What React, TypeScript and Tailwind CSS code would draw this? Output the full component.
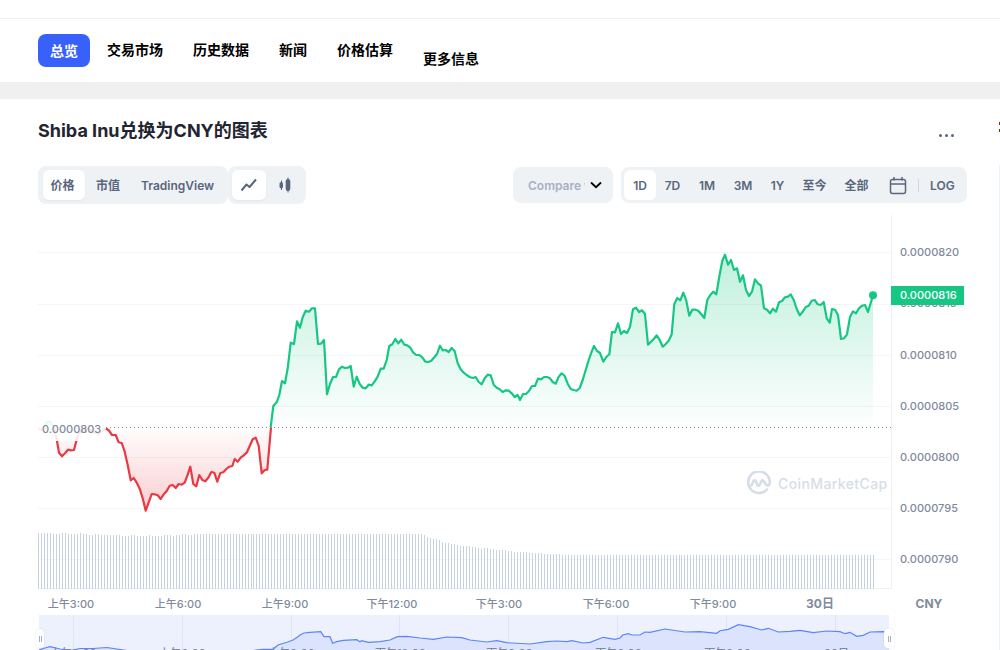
import React from "react";

const FONT = { fontFamily: "Inter, 'Noto Sans CJK SC', sans-serif" };

type P = [number, number];
const map = (pts: number[][], ox: number, oy: number): P[] =>
  pts.map(([x, y]) => [ox + x / 3, oy + y / 3] as P);
const str = (pts: P[]) => pts.map(([x, y]) => `${x.toFixed(1)},${y.toFixed(1)}`).join(" ");

const green: P[] = [
  ...map(
    [[62,442],[70,378],[80,367],[88,345],[96,303],[105,310],[113,265],[122,188],[132,192],[141,124],[150,143],[158,112],[167,92],[177,95],[186,85],[195,85],[204,192],[213,191],[222,180],[231,343],[240,312],[249,291],[258,291],[267,268],[276,260],[285,264],[294,263],[302,258],[311,320],[320,290],[329,312],[338,323],[347,325],[356,314],[365,316],[374,304],[383,290],[392,266],[401,266],[410,240],[418,198],[427,193],[436,177],[445,190],[454,179],[463,194],[472,196],[481,203],[490,218],[499,225],[508,225],[517,232],[526,245],[535,246],[544,242],[553,232],[561,222],[570,197],[578,211],[587,210],[596,216],[605,204],[614,214],[623,250],[632,268],[641,278],[650,285],[659,291],[668,294],[677,291],[686,306],[695,313],[704,295],[713,284],[722,286],[731,314],[740,323],[749,328],[758,336],[767,331],[776,332],[785,340],[794,351],[803,345],[810,360],[819,342],[828,342],[837,333],[846,318],[855,318],[864,296],[873,298],[882,291],[891,291],[900,295]],
    250, 280),
  ...map(
    [[8,426],[17,431],[26,410],[35,400],[44,408],[53,431],[62,447],[71,450],[80,452],[89,444],[98,420],[107,390],[116,360],[125,335],[132,318],[141,333],[150,339],[160,365],[169,351],[178,343],[186,276],[195,277],[204,250],[213,282],[222,273],[231,279],[240,260],[249,208],[258,203],[267,216],[276,211],[285,222],[294,314],[303,305],[312,296],[320,286],[329,300],[338,320],[347,312],[356,302],[365,283],[373,192],[382,174],[391,181],[400,158],[409,182],[418,227],[427,209],[436,209],[445,212],[454,223],[463,234],[472,180],[481,165],[490,155],[499,163],[508,110],[517,62],[525,44],[534,74],[543,60],[552,90],[561,85],[570,125],[579,106],[588,150],[597,168],[606,155],[615,118],[624,130],[633,137],[642,205],[651,209],[660,220],[669,206],[678,215],[687,187],[696,183],[705,172],[714,170],[722,163],[731,180],[740,207],[749,226],[758,215],[767,201],[776,197],[785,182],[794,180],[803,193],[812,195],[821,186],[830,235],[839,248],[846,207],[855,209],[864,225],[873,297],[882,295],[891,283],[900,231],[909,214],[918,220],[927,205],[936,197],[945,195],[954,216],[969,166]],
    550, 240),
];

const red2 = map(
  [[228,55],[237,62],[246,75],[257,75],[266,97],[275,99],[284,125],[293,165],[302,211],[311,204],[320,218],[329,236],[338,265],[347,302],[356,277],[365,252],[374,253],[383,256],[392,267],[401,253],[410,243],[419,227],[428,225],[437,234],[446,222],[455,224],[464,218],[473,194],[481,170],[490,222],[499,229],[508,195],[517,210],[526,214],[535,203],[544,186],[553,188],[562,215],[571,189],[580,187],[589,177],[598,170],[607,168],[614,147],[623,155],[632,143],[641,136],[650,128],[659,108],[668,88],[677,83],[686,108],[695,190],[704,180],[712,179],[723,52]],
  30, 410);

const red1 = map(
  [[72,52],[76,70],[81,93],[87,128],[96,139],[105,130],[114,119],[123,121],[132,120],[139,93],[145,72],[155,62],[170,55],[195,68],[207,72],[220,60],[228,55]],
  30, 410);
const redGhost = map([[25,54],[35,60],[42,54]], 30, 410);
const greenGhost = map([[42,52],[50,37],[58,35],[66,42],[72,52]], 30, 410);

const mini: P[] = [
  [39, 650], [45, 648], [50, 646.7], [60, 649], [70, 650.5], [80, 648.5], [93, 648.5], [107, 647.5], [127, 650.5],
  [253, 650.5], [263, 649.3], [273, 649.3], [278, 645], [287, 642.3], [293, 640], [298, 636.7],
  ...map([[0,135],[12,129],[30,127],[62,125],[72,140],[90,140],[98,160],[110,155],[130,151],[170,149],[180,155],[185,152],[205,157],[240,155],[270,150],[292,140],[320,139],[360,144],[400,148],[440,141],[485,143],[510,150],[560,156],[590,152],[620,158],[690,162],[740,155],[770,153],[800,155],[815,152],[850,159],[870,157],[910,142],[945,148],[960,144],[968,135],[985,131],[995,135],[1020,135],[1035,126],[1050,127]], 300, 590),
  [665, 629], [685, 632],
  ...map([[0,575],[50,580],[60,572],[85,568],[115,554],[150,560],[185,570],[205,565],[235,576],[270,574],[300,571],[340,578],[380,573],[420,575],[435,581],[450,577],[470,589],[490,586],[510,576],[550,575],[565,577]], 700, 440),
];

const barTop = (x: number) => {
  const knots: P[] = [[38,533],[85,534],[120,535.5],[150,536],[200,534],[280,534],[350,534],[420,534],[440,541],[455,545],[480,548],[520,552],[570,555],[874,555]];
  let base = 555;
  for (let i = 0; i < knots.length - 1; i++) {
    const [a, b] = knots[i];
    const [c, d] = knots[i + 1];
    if (x >= a && x <= c) base = b + ((d - b) * (x - a)) / (c - a);
  }
  return Math.round(base + Math.sin(x * 0.37) * 0.5);
};
const bars = Array.from({ length: 280 }, (_, i) => Math.round(38 + i * 2.993));
const gridYs = [252, 304, 355, 406, 457, 508, 559];
const yLabels = ["0.0000820", "0.0000815", "0.0000810", "0.0000805", "0.0000800", "0.0000795", "0.0000790"];
const xLabels = ["上午3:00", "上午6:00", "上午9:00", "下午12:00", "下午3:00", "下午6:00", "下午9:00"];
const miniGrid = [73, 182, 291, 399, 508, 617, 726, 835];

function Tabs() {
  return (
    <nav className="flex h-[63px] items-start border-t border-[#eff2f5] pl-[38px] text-[14px] font-semibold text-black mt-[18px] box-content">
      <div className="mt-[15px] flex h-[33px] w-[52px] items-center justify-center rounded-lg bg-[#3861fb] pb-px text-white">总览</div>
      <div className="ml-[17px] mt-[21px] leading-[20px]">交易市场</div>
      <div className="ml-[30px] mt-[21px] leading-[20px]">历史数据</div>
      <div className="ml-[30px] mt-[21px] leading-[20px]">新闻</div>
      <div className="ml-[30px] mt-[21px] leading-[20px]">价格估算</div>
      <div className="ml-[30px] mt-[30px] leading-[20px]">更多信息</div>
    </nav>
  );
}

function Toolbar() {
  return (
    <div className="ml-[38px] mt-[23px] flex h-[38px] w-[929px] items-start text-[12px] font-semibold text-[#58667e]">
      <div className="flex h-[38px] w-[190px] items-center rounded-lg bg-[#eff2f5] pl-[5px]">
        <div className="flex h-[30px] w-[42px] items-center justify-center rounded-md bg-white pr-[3px] pt-px shadow-[0_1px_2px_rgba(88,102,126,0.08)]">价格</div>
        <div className="ml-[11px] w-[24px] pt-px">市值</div>
        <div className="ml-[21px] pt-px">TradingView</div>
      </div>
      <div className="flex h-[38px] w-[78px] items-center rounded-lg bg-[#eff2f5] pl-[4px]">
        <div className="flex h-[30px] w-[34px] items-center justify-center rounded-md bg-white shadow-[0_1px_2px_rgba(88,102,126,0.08)]">
          <svg width="18" height="14" viewBox="0 0 18 14" fill="none" stroke="#58667e" strokeWidth="2" strokeLinejoin="round">
            <path d="M1.5 12.5 L6.5 6.5 L9.5 9 L16 1.5" />
          </svg>
        </div>
        <svg className="ml-[12px]" width="14" height="16" viewBox="0 0 14 16" fill="#58667e" stroke="#58667e">
          <path d="M3.5 3.5 V13" strokeWidth="1" />
          <rect x="1.5" y="5" width="3.5" height="6.5" rx="1.7" stroke="none" />
          <path d="M10 0.5 V15.5" strokeWidth="1" />
          <rect x="7.7" y="2" width="4.6" height="12" rx="2.2" stroke="none" />
        </svg>
      </div>
      <div className="mt-[1px] ml-[207px] flex h-[36px] w-[100px] items-center rounded-lg bg-[#eff2f5] pl-[15px]">
        <div className="w-[57px] overflow-hidden whitespace-nowrap pt-px text-[#a6b0c3]">Compare with</div>
        <svg className="ml-[5px]" width="12" height="8" viewBox="0 0 12 8" fill="none" stroke="#000" strokeWidth="1.8">
          <path d="M1 1.5 L6 6.2 L11 1.5" />
        </svg>
      </div>
      <div className="mt-[1px] ml-[8px] flex h-[36px] w-[346px] items-center rounded-lg bg-[#eff2f5] pl-[3px]">
        <div className="flex h-[30px] w-[32px] items-center justify-center rounded-md bg-white pt-px">1D</div>
        <div className="w-[33px] pt-px text-center">7D</div>
        <div className="w-[36px] pt-px text-center">1M</div>
        <div className="w-[36px] pt-px text-center">3M</div>
        <div className="w-[33px] pt-px text-center">1Y</div>
        <div className="ml-[2px] w-[37px] pt-px text-center">至今</div>
        <div className="ml-[5px] w-[37px] pt-px text-center">全部</div>
        <svg className="ml-[14px]" width="18" height="19" viewBox="0 0 18 19" fill="none" stroke="#58667e" strokeWidth="1.5">
          <rect x="1.5" y="3.5" width="15" height="14" rx="2" />
          <path d="M1.5 8 H16.5 M5 1 V4.5 M13 1 V4.5" />
        </svg>
        <div className="ml-[11px] h-[13px] w-px bg-[#cfd6e4]" />
        <div className="ml-[11px] pt-px">LOG</div>
      </div>
    </div>
  );
}

function ChartSvg() {
  return (
    <svg className="block" width="853" height="374" viewBox="38 215 853 374">
      <defs>
        <linearGradient id="gf" gradientUnits="userSpaceOnUse" x1="0" y1="254" x2="0" y2="427">
          <stop offset="0" stopColor="#16c784" stopOpacity="0.27" />
          <stop offset="1" stopColor="#16c784" stopOpacity="0.01" />
        </linearGradient>
        <linearGradient id="rf" gradientUnits="userSpaceOnUse" x1="0" y1="427" x2="0" y2="511">
          <stop offset="0" stopColor="#ea3943" stopOpacity="0.01" />
          <stop offset="1" stopColor="#ea3943" stopOpacity="0.25" />
        </linearGradient>
      </defs>
      {gridYs.map((y) => (
        <line key={y} x1="38" x2="891" y1={y + 0.5} y2={y + 0.5} stroke="#f3f5f7" />
      ))}
      <line x1="38" x2="891" y1="588.5" y2="588.5" stroke="#eff2f5" />
      {[71, 178, 285, 392, 499, 606, 713, 820].map((x) => (
        <line key={x} x1={x + 0.5} x2={x + 0.5} y1="585" y2="589" stroke="#eff2f5" />
      ))}
      {bars.map((x, i) => (
        <rect key={i} x={x} y={barTop(x)} width="1" height={589 - barTop(x)} fill="#c6d1e1" />
      ))}
      <polygon points={`${str(green)} 873,427 270.7,427`} fill="url(#gf)" />
      <polygon points={`${str(red2)} 106,427`} fill="url(#rf)" />
      <polygon points={`${str(red1)}`} fill="url(#rf)" />
      <polyline points={str(redGhost)} fill="none" stroke="#ea3943" strokeWidth="2.2" />
      <polyline points={str(greenGhost)} fill="none" stroke="#16c784" strokeWidth="2.2" />
      <polyline points={str(red1)} fill="none" stroke="#ea3943" strokeWidth="2.2" strokeLinejoin="round" />
      <rect x="38" y="417" width="68" height="24" fill="#fff" fillOpacity="0.88" />
      <line x1="106" x2="891" y1="427.5" y2="427.5" stroke="#808a9d" strokeDasharray="1 3" />
      <polyline points={str(red2)} fill="none" stroke="#ea3943" strokeWidth="2.2" strokeLinejoin="round" />
      <polyline points={str(green)} fill="none" stroke="#16c784" strokeWidth="2.2" strokeLinejoin="round" />
      <circle cx="873" cy="295.3" r="4" fill="#16c784" />
    </svg>
  );
}

function Chart() {
  return (
    <div className="relative mt-[11px]">
      <div className="ml-[38px] flex">
        <div className="relative h-[374px] w-[853px]">
          <ChartSvg />
          <div className="absolute left-[4px] top-[206px] text-[11px] leading-[16px] font-medium text-[#808a9d]">0.0000803</div>
          <div className="absolute left-[709px] top-[256px] flex items-center">
            <svg width="24" height="24" viewBox="0 0 24 24" fill="none" stroke="#d5dde9" strokeWidth="2.6" strokeLinecap="round" strokeLinejoin="round">
              <path d="M20 18.5 A10.8 10.8 0 1 1 22.8 11.5 C22.9 13.5 21.6 14.8 20 14.3 C18.6 13.9 18 12.6 17 10.5 C16.4 9.3 15.4 8.9 14.7 9.9 L12.6 14 C12 15 11 15 10.4 14 L8.7 10 C8.2 9 7.2 9 6.6 10 L4.5 14.5" />
            </svg>
            <span className="ml-[7px] text-[14px] font-medium tracking-[0.4px] text-[#d5dde9]">CoinMarketCap</span>
          </div>
        </div>
        <div className="flex h-[374px] w-[108px] flex-col border-l border-[#eff2f5] pl-[8px] pt-[12px] text-[11px] font-medium text-[#808a9d]">
          {yLabels.map((l) => (
            <div key={l} className="flex h-[51.17px] shrink-0 items-center">{l}</div>
          ))}
        </div>
      </div>
      <div className="absolute left-[891px] top-[71px] flex h-[19px] w-[73px] items-center bg-[#16c784] pl-[9px] text-[11px] font-medium text-white">0.0000816</div>
      <div className="flex h-[26px] pl-[17.5px] text-[11px] font-medium text-[#808a9d]">
        {xLabels.map((l) => (
          <div key={l} className="flex w-[107px] items-center justify-center pt-[4px]">{l}</div>
        ))}
        <div className="flex w-[107px] items-center justify-center pt-[4px] text-[12px] font-bold">30日</div>
        <div className="ml-[2px] flex w-[107px] items-center justify-center pt-[4px] text-[12px] font-bold">CNY</div>
      </div>
      <div className="relative ml-[39px] h-[35px] w-[850px] bg-[#edf1fe]">
        <svg className="absolute inset-0" width="850" height="35" viewBox="39 615 850 35">
          {miniGrid.map((x) => (
            <line key={x} x1={x + 0.5} x2={x + 0.5} y1="615" y2="650" stroke="#dfe4f2" />
          ))}
          <polygon points={`${str(mini)} 889,655 39,655`} fill="#dbe3fd" />
          <polyline points={str(mini)} fill="none" stroke="#5c85f9" strokeWidth="1.2" />
        </svg>
        <div className="absolute left-[-20px] top-[31px] flex text-[11px] font-medium text-[#808a9d]">
          {[...xLabels, "30日"].map((l) => (
            <div key={l} className="w-[109px] text-center leading-[14px]">{l}</div>
          ))}
        </div>
        <div className="absolute left-[-3px] top-[14px] flex h-[19px] w-[8px] items-center justify-center gap-px rounded-[4px] bg-white shadow-[0_0_2px_rgba(88,102,126,0.2)]">
          <span className="h-[6px] w-px bg-[#a6b0c3]" />
          <span className="h-[6px] w-px bg-[#a6b0c3]" />
        </div>
        <div className="absolute left-[845px] top-[14px] flex h-[19px] w-[10px] items-center justify-center gap-px rounded-[4px] bg-white shadow-[0_0_2px_rgba(88,102,126,0.2)]">
          <span className="h-[6px] w-px bg-[#a6b0c3]" />
          <span className="h-[6px] w-px bg-[#a6b0c3]" />
        </div>
      </div>
    </div>
  );
}

export default function App() {
  return (
    <div className="relative h-[650px] w-[1000px] overflow-hidden bg-white" style={FONT}>
      <Tabs />
      <div className="h-[17px] bg-[#f0f0f0]" />
      <div className="flex">
        <div className="w-[999px]">
          <div className="flex h-[44px] items-end justify-between pl-[38px] pr-[45px]">
            <h2 className="text-[18px] leading-[24px] font-bold text-[#222531]">Shiba Inu兑换为CNY的图表</h2>
            <div className="mb-[6px] flex gap-[3px]">
              <span className="h-[3px] w-[3px] rounded-full bg-[#58667e]" />
              <span className="h-[3px] w-[3px] rounded-full bg-[#58667e]" />
              <span className="h-[3px] w-[3px] rounded-full bg-[#58667e]" />
            </div>
          </div>
          <Toolbar />
          <Chart />
        </div>
        <div className="relative w-px">
          <span className="absolute left-0 top-[23px] h-[3px] w-px bg-[#6b3a00]" />
          <span className="absolute left-0 top-[30px] h-[3px] w-px bg-[#6b3a00]" />
          <span className="absolute bottom-0 left-0 top-[66px] w-px bg-[#eff2f5]" />
        </div>
      </div>
    </div>
  );
}
